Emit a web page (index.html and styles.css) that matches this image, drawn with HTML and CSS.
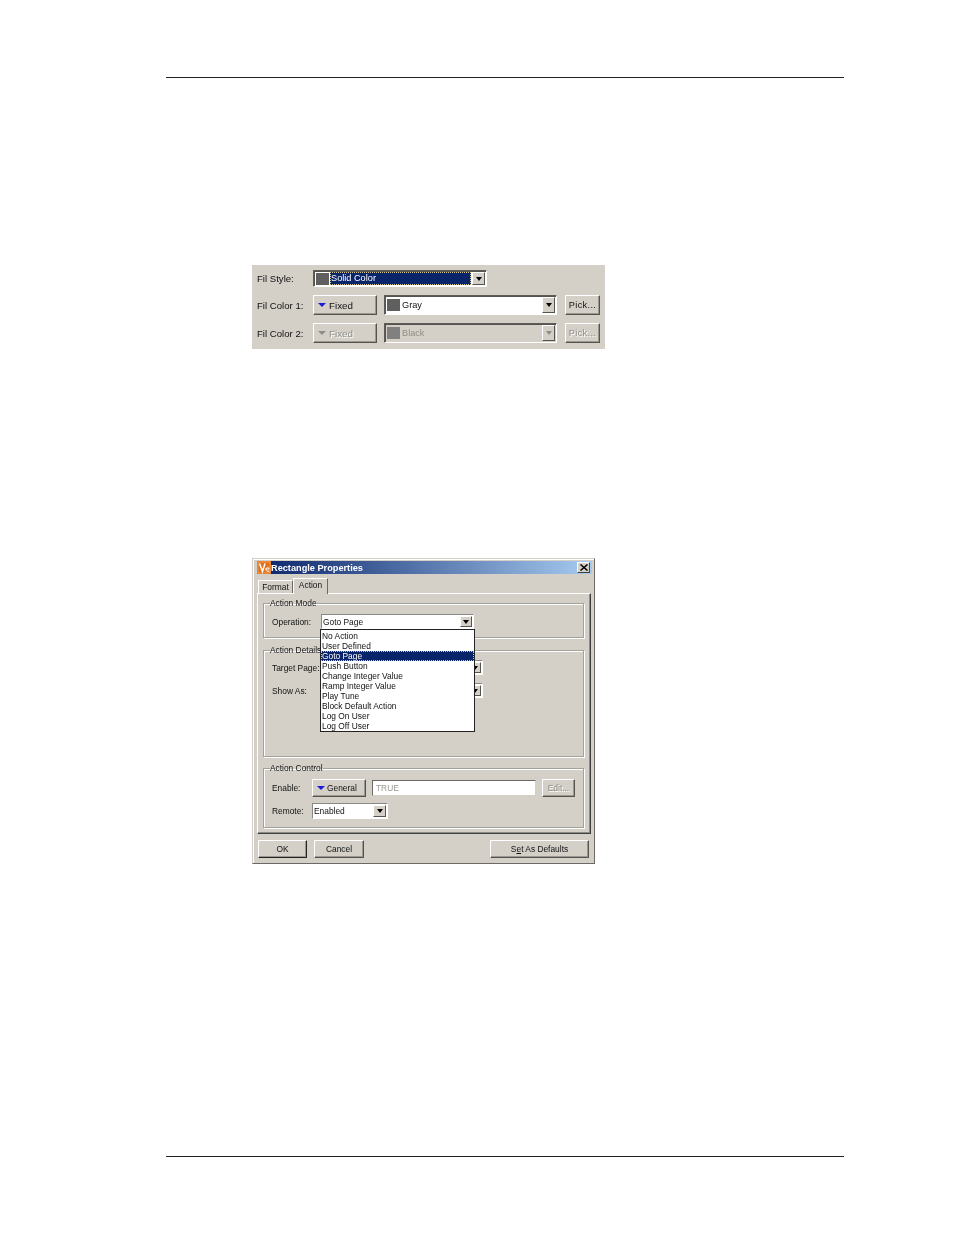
FILE: index.html
```html
<!DOCTYPE html>
<html lang="en">
<head>
<meta charset="utf-8">
<title>Rectangle Properties</title>
<link rel="stylesheet" href="styles.css">
</head>
<body>
<main class="page">
  <hr class="rule rule-top">

  <section class="fill-panel">
    <div class="fill-row fill-row-first">
      <span class="fill-label">Fil Style:</span>
      <div class="combo combo-style">
        <span class="swatch swatch-dark"></span>
        <span class="combo-selected">Solid Color</span>
        <span class="arrow-btn"><i class="arrow"></i></span>
      </div>
    </div>
    <div class="fill-row">
      <span class="fill-label">Fil Color 1:</span>
      <button class="btn btn-mode"><i class="tri"></i>Fixed</button>
      <div class="combo combo-color">
        <span class="swatch swatch-dark"></span>
        <span class="combo-text">Gray</span>
        <span class="arrow-btn"><i class="arrow"></i></span>
      </div>
      <button class="btn btn-pick">Pick...</button>
    </div>
    <div class="fill-row">
      <span class="fill-label">Fil Color 2:</span>
      <button class="btn btn-mode is-disabled"><i class="tri"></i>Fixed</button>
      <div class="combo combo-color is-disabled">
        <span class="swatch swatch-mid"></span>
        <span class="combo-text">Black</span>
        <span class="arrow-btn"><i class="arrow"></i></span>
      </div>
      <button class="btn btn-pick is-disabled">Pick...</button>
    </div>
  </section>

  <section class="dialog">
    <header class="titlebar">
      <svg class="app-icon" viewBox="0 0 14 13" aria-hidden="true">
        <rect width="14" height="13" fill="#e0701a"/>
        <rect x="1" y="1" width="12" height="11" fill="none" stroke="#f4a868" stroke-width=".8"/>
        <path d="M2.5 2.5 5.5 10.5 8 2.5" fill="none" stroke="#fff" stroke-width="1.5"/>
        <path d="M8.5 8H12M12 8C12 6 9.5 6 9 8C8.6 10 10.5 11 12.5 10" fill="none" stroke="#fff" stroke-width="1"/>
      </svg>
      <h1 class="title">Rectangle Properties</h1>
      <span class="close-btn">
        <svg viewBox="0 0 8 7" aria-hidden="true"><path d="M.5.5 7.5 6.5M7.5.5.5 6.5" stroke="#000" stroke-width="1.5"/></svg>
      </span>
    </header>

    <nav class="tabs">
      <span class="tab">Format</span>
      <span class="tab tab-active">Action</span>
    </nav>

    <div class="tab-panel">
      <fieldset class="group group-mode">
        <legend>Action Mode</legend>
        <div class="form-row">
          <span class="form-label">Operation:</span>
          <div class="op-wrap">
            <div class="combo combo-op">
              <span class="combo-text">Goto Page</span>
              <span class="arrow-btn"><i class="arrow"></i></span>
            </div>
            <ul class="dropdown">
              <li>No Action</li>
              <li>User Defined</li>
              <li class="selected">Goto Page</li>
              <li>Push Button</li>
              <li>Change Integer Value</li>
              <li>Ramp Integer Value</li>
              <li>Play Tune</li>
              <li>Block Default Action</li>
              <li>Log On User</li>
              <li>Log Off User</li>
            </ul>
          </div>
        </div>
      </fieldset>

      <fieldset class="group group-details">
        <legend>Action Details</legend>
        <div class="form-row">
          <span class="form-label">Target Page:</span>
          <div class="combo combo-detail"><span class="combo-text"></span><span class="arrow-btn"><i class="arrow"></i></span></div>
        </div>
        <div class="form-row form-row-show">
          <span class="form-label">Show As:</span>
          <div class="combo combo-detail"><span class="combo-text"></span><span class="arrow-btn"><i class="arrow"></i></span></div>
        </div>
      </fieldset>

      <fieldset class="group group-control">
        <legend>Action Control</legend>
        <div class="form-row">
          <span class="form-label label-short">Enable:</span>
          <button class="btn btn-general"><i class="tri"></i>General</button>
          <div class="text-input">TRUE</div>
          <button class="btn btn-edit is-disabled">Edit...</button>
        </div>
        <div class="form-row form-row-remote">
          <span class="form-label label-short">Remote:</span>
          <div class="combo combo-remote">
            <span class="combo-text">Enabled</span>
            <span class="arrow-btn"><i class="arrow"></i></span>
          </div>
        </div>
      </fieldset>
    </div>

    <footer class="dialog-actions">
      <button class="btn btn-ok">OK</button>
      <button class="btn btn-cancel">Cancel</button>
      <button class="btn btn-defaults">S<u>e</u>t As Defaults</button>
    </footer>
  </section>

  <hr class="rule rule-bottom">
</main>
</body>
</html>
```

FILE: styles.css
```css
* { box-sizing: border-box; }
html, body { margin: 0; background: #fff; }
body { font-family: "Liberation Sans", Arial, sans-serif; font-size: 8.4px; color: #111; }

.page { width: 954px; height: 1235px; padding-top: 77px; overflow: hidden; }

.rule { border: 0; height: 1px; background: #222; margin: 0 110px 0 166px; }
.rule-bottom { margin-top: 292px; }

/* Shared controls */
.btn {
  font: inherit; color: #111; background: #d4d0c8; padding: 0;
  display: flex; align-items: center; justify-content: center;
  border: 1px solid; border-color: #fff #55534e #55534e #fff;
  box-shadow: inset -1px -1px 0 #9a9890;
}
.btn.is-disabled { color: #8f8d87; text-shadow: 1px 1px 0 #fff; }
.tri { width: 0; height: 0; border: 4px solid transparent; border-top: 4px solid #1a1ad8; border-bottom: 0; margin-right: 2px; }
.is-disabled .tri { border-top-color: #8f8d87; }

.combo {
  display: flex; align-items: center; background: #fff; padding: 1px;
  border: 1px solid; border-color: #5e5c58 #fff #fff #5e5c58;
  box-shadow: inset 1px 1px 0 #55534e;
}
.dialog .combo { border-color: #8a8884 #fff #fff #8a8884; box-shadow: none; }
.combo-text { flex: 1; }
.combo.is-disabled { background: #d4d0c8; color: #8f8d87; }
.arrow-btn {
  width: 13px; align-self: stretch; background: #d4d0c8;
  display: flex; align-items: center; justify-content: center;
  border: 1px solid; border-color: #fff #55534e #55534e #fff;
}
.arrow { width: 0; height: 0; border: 3px solid transparent; border-top: 4px solid #000; border-bottom: 0; }
.is-disabled .arrow { border-top-color: #8f8d87; }
.swatch { width: 13px; height: 12px; margin-left: 1px; flex: none; }
.swatch-dark { background: #5f5f5f; }
.swatch-mid { background: #808080; }

/* Fill panel */
.fill-panel {
  width: 353px; height: 84px; margin: 187px 0 0 252px; padding: 5px 0 0 5px;
  background: #d4d0c8; display: flex; flex-direction: column; gap: 8px;
  font-size: 9.2px; filter: blur(.35px);
}
.fill-row { display: flex; align-items: center; height: 20px; }
.fill-row-first { height: 17px; }
.fill-label { width: 56px; flex: none; font-size: 9.6px; }
.combo-style { width: 174px; height: 17px; }
.combo-selected { flex: 1; align-self: stretch; margin-left: 1px; background: #0a246a; color: #fff; outline: 1px dotted #d8c88a; outline-offset: -1px; padding-left: 1px; line-height: 13px; }
.combo-style .arrow-btn { margin-left: 1px; }
.btn-mode { width: 64px; height: 20px; justify-content: flex-start; padding-left: 4px; font-size: 9.8px; }
.btn-mode .tri { margin-right: 3px; }
.combo-color { width: 173px; height: 20px; margin-left: 7px; }
.combo-color .combo-text { padding-left: 2px; }
.btn-pick { width: 35px; height: 20px; margin-left: 8px; letter-spacing: .35px; }

/* Dialog */
.dialog {
  width: 343px; height: 306px; margin: 209px 0 0 252px; padding: 2px 2px 6px 4px;
  background: #d4d0c8; border: 1px solid; border-color: #d4d0c8 #6b6965 #6b6965 #d4d0c8;
  box-shadow: inset 1px 1px 0 #fff; filter: blur(.35px);
}
.titlebar {
  height: 13px; display: flex; align-items: center;
  background: linear-gradient(90deg, #0a246a, #a6caf0);
}
.app-icon { width: 14px; height: 13px; flex: none; }
.title { margin: 0; flex: 1; font-size: 9.2px; font-weight: 700; color: #fff; }
.close-btn {
  width: 13px; height: 11px; margin-right: 2px; background: #d4d0c8;
  border: 1px solid; border-color: #fff #404040 #404040 #fff;
  display: flex; align-items: center; justify-content: center;
}
.close-btn svg { width: 8px; height: 7px; }

.tabs { display: flex; align-items: flex-end; height: 19px; padding-left: 1px; }
.tab {
  width: 35px; height: 13px; line-height: 13px; text-align: center;
  border: 1px solid; border-color: #fff #6b6965 transparent #fff; border-bottom: 0;
}
.tab-active {
  height: 16px; line-height: 12px; margin-bottom: -1px; background: #d4d0c8;
  position: relative; z-index: 1;
}

.tab-panel {
  height: 241px; padding: 4px 5px 0; width: 334px;
  border: 1px solid; border-color: #fff #404040 #404040 #fff;
  box-shadow: inset -1px -1px 0 #8c8a85;
}
.group {
  margin: 0; padding: 0; min-width: 0; width: 321px;
  border: 1px solid #a3a19c; box-shadow: 1px 1px 0 #fff, inset 1px 1px 0 #fff;
}
.group legend { padding: 0; margin-left: 6px; line-height: 11px; }
.group-mode { height: 40px; }
.group-details { height: 112px; margin-top: 7px; }
.group-control { height: 65px; margin-top: 6px; }

.form-row { display: flex; align-items: center; margin-left: 8px; }
.form-label { width: 49px; flex: none; white-space: nowrap; }
.label-short { width: 40px; }
.group-mode .form-row { margin-top: 5px; }
.op-wrap { position: relative; }
.combo-op { width: 153px; height: 15px; }
.combo-op .arrow-btn { width: 12px; }
.dropdown {
  position: absolute; left: -1px; top: 15px; z-index: 5; width: 155px; height: 103px;
  margin: 0; padding: 1px 0; list-style: none; background: #fff; border: 1px solid #222;
}
.dropdown li { height: 10px; line-height: 10px; padding-left: 1px; }
.dropdown .selected { background: #0a246a; color: #fff; outline: 1px dotted #d8c88a; outline-offset: -1px; }

.group-details .form-row { margin-top: 4px; }
.group-details .form-row-show { margin-top: 8px; }
.combo-detail { width: 162px; height: 15px; }

.group-control .form-row { margin-top: 5px; }
.btn-general { width: 54px; height: 18px; justify-content: flex-start; padding-left: 4px; }
.text-input {
  width: 164px; height: 16px; margin-left: 6px; padding: 1px 0 0 3px; color: #9a9893; background: #fff;
  border: 1px solid; border-color: #6b6965 #d4d0c8 #d4d0c8 #6b6965; line-height: 13px;
}
.btn-edit { width: 33px; height: 18px; margin-left: 6px; }
.group-control .form-row-remote { margin-top: 6px; }
.combo-remote { width: 76px; height: 16px; }

.dialog-actions { display: flex; margin-top: 6px; padding-left: 1px; }
.dialog-actions .btn { height: 18px; }
.btn-ok { width: 49px; border-color: #fff #222 #222 #fff; }
.btn-cancel { width: 50px; margin-left: 7px; }
.btn-defaults { width: 99px; margin-left: 126px; }
```
